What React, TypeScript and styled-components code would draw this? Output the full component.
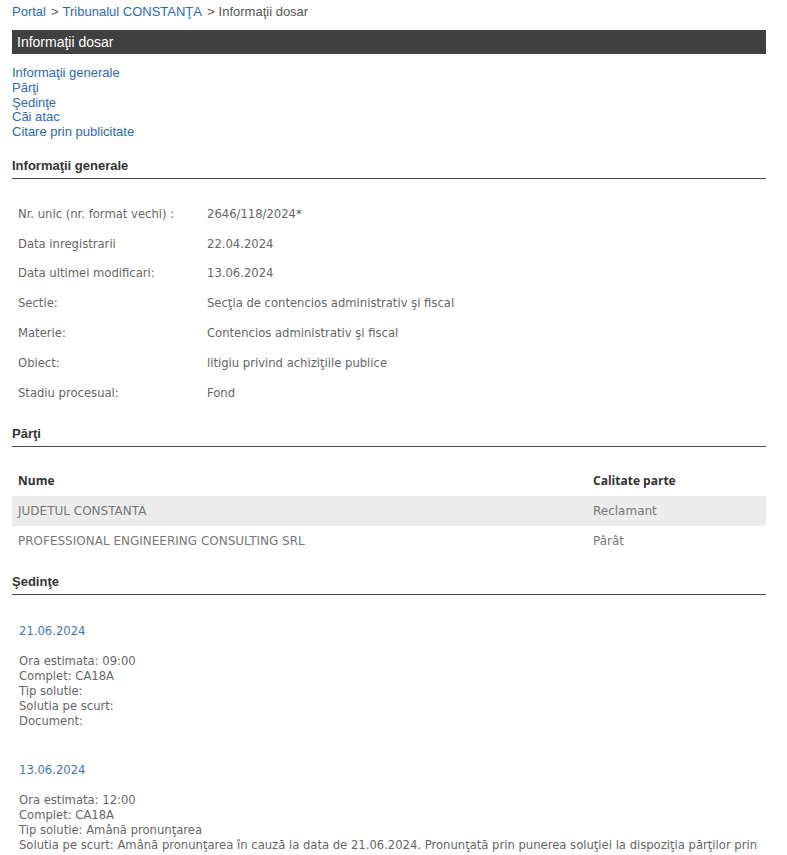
import React from 'react';
import styled, { createGlobalStyle } from 'styled-components';

const GlobalStyle = createGlobalStyle`
  body {
    margin: 0;
    background: #ffffff;
    font-family: 'Liberation Sans', Arial, sans-serif;
  }
`;

const info = [
  ['Nr. unic (nr. format vechi) :', '2646/118/2024*'],
  ['Data inregistrarii', '22.04.2024'],
  ['Data ultimei modificari:', '13.06.2024'],
  ['Sectie:', 'Secţia de contencios administrativ şi fiscal'],
  ['Materie:', 'Contencios administrativ şi fiscal'],
  ['Obiect:', 'litigiu privind achiziţiile publice'],
  ['Stadiu procesual:', 'Fond'],
];

const parti = [
  { nume: 'JUDETUL CONSTANTA', calitate: 'Reclamant' },
  { nume: 'PROFESSIONAL ENGINEERING CONSULTING SRL', calitate: 'Pârât' },
];

const sedinte = [
  {
    data: '21.06.2024',
    ora: '09:00',
    complet: 'CA18A',
    tip: '',
    solutie: '',
    document: '',
  },
  {
    data: '13.06.2024',
    ora: '12:00',
    complet: 'CA18A',
    tip: 'Amână pronunţarea',
    solutie:
      'Amână pronunţarea în cauză la data de 21.06.2024. Pronunţată prin punerea soluţiei la dispoziţia părţilor prin mijlocirea grefei instanţei.',
    document: 'Încheiere de amânare a pronunţării 13.06.2024',
  },
];

export default function App() {
  return (
    <>
      <GlobalStyle />
      <Page>
        <Breadcrumb>
          <Crumb href="#">Portal</Crumb>
          <Sep>&gt;</Sep>
          <Crumb href="#">Tribunalul CONSTANŢA</Crumb>
          <Sep>&gt;</Sep>
          <Current>Informaţii dosar</Current>
        </Breadcrumb>

        <TitleBar>Informaţii dosar</TitleBar>

        <Menu>
          <MenuLink href="#">Informaţii generale</MenuLink>
          <MenuLink href="#">Părţi</MenuLink>
          <MenuLink href="#">Şedinţe</MenuLink>
          <MenuLink href="#">Căi atac</MenuLink>
          <MenuLink href="#">Citare prin publicitate</MenuLink>
        </Menu>

        <SectionTitle>Informaţii generale</SectionTitle>
        <InfoTable>
          {info.map(([label, value]) => (
            <InfoRow key={label}>
              <span>{label}</span>
              <span>{value}</span>
            </InfoRow>
          ))}
        </InfoTable>

        <SectionTitle>Părţi</SectionTitle>
        <PartiTable>
          <PartiRow>
            <HeadCell>Nume</HeadCell>
            <HeadCell>Calitate parte</HeadCell>
          </PartiRow>
          {parti.map((p, i) => (
            <PartiRow key={p.nume} striped={i % 2 === 0}>
              <Cell>{p.nume}</Cell>
              <Cell>{p.calitate}</Cell>
            </PartiRow>
          ))}
        </PartiTable>

        <SectionTitle>Şedinţe</SectionTitle>
        <Sedinte>
          {sedinte.map((s) => (
            <Sedinta key={s.data}>
              <SedintaDate>{s.data}</SedintaDate>
              <SedintaLines>
                <div>Ora estimata: {s.ora}</div>
                <div>Complet: {s.complet}</div>
                <div>Tip solutie: {s.tip}</div>
                <div>Solutia pe scurt: {s.solutie}</div>
                <div>Document: {s.document}</div>
              </SedintaLines>
            </Sedinta>
          ))}
        </Sedinte>
      </Page>
    </>
  );
}

const Page = styled.div`
  width: 754px;
  margin-left: 12px;
  padding-top: 4px;
  padding-bottom: 40px;
`;

const Breadcrumb = styled.div`
  display: flex;
  align-items: baseline;
  font-size: 13px;
  line-height: 16px;
  color: #555555;
`;

const Crumb = styled.a`
  color: #2a6ab4;
  text-decoration: none;
`;

const Sep = styled.span`
  margin: 0 4px 0 5px;
  color: #555555;
`;

const Current = styled.span`
  color: #555555;
`;

const TitleBar = styled.div`
  margin-top: 10px;
  height: 24px;
  line-height: 24px;
  padding-left: 5px;
  background: #404040;
  color: #ffffff;
  font-size: 14px;
`;

const Menu = styled.div`
  display: flex;
  flex-direction: column;
  margin-top: 12px;
`;

const MenuLink = styled.a`
  font-size: 13px;
  line-height: 14.8px;
  color: #2a6ab4;
  text-decoration: none;
`;

const SectionTitle = styled.div`
  margin-top: 18px;
  padding-bottom: 4px;
  border-bottom: 1px solid #4a4a4a;
  font-size: 13px;
  font-weight: bold;
  line-height: 16px;
  color: #333333;
`;

const InfoTable = styled.div`
  display: flex;
  flex-direction: column;
  padding-top: 20px;
  padding-left: 6px;
`;

const InfoRow = styled.div`
  display: grid;
  grid-template-columns: 189px 1fr;
  height: 29.8px;
  align-items: center;
  font-family: 'DejaVu Sans', Verdana, sans-serif;
  font-size: 11.6px;
  color: #666666;
`;

const PartiTable = styled.div`
  display: flex;
  flex-direction: column;
  padding-top: 19px;
`;

const PartiRow = styled.div<{ striped?: boolean }>`
  display: grid;
  grid-template-columns: 575px 1fr;
  height: 30px;
  align-items: center;
  padding-left: 6px;
  background: ${(props) => (props.striped ? '#ececec' : 'transparent')};
`;

const HeadCell = styled.span`
  font-family: 'Open Sans', 'DejaVu Sans', sans-serif;
  font-size: 12px;
  font-weight: bold;
  color: #333333;
`;

const Cell = styled.span`
  font-family: 'DejaVu Sans', Verdana, sans-serif;
  font-size: 12px;
  color: #777777;
`;

const Sedinte = styled.div`
  display: flex;
  flex-direction: column;
  gap: 34px;
  padding-top: 29px;
  padding-left: 7px;
`;

const Sedinta = styled.div`
  display: flex;
  flex-direction: column;
`;

const SedintaDate = styled.div`
  font-family: 'DejaVu Sans', Verdana, sans-serif;
  font-size: 11.6px;
  line-height: 15px;
  color: #3f78b4;
  margin-bottom: 15px;
`;

const SedintaLines = styled.div`
  font-family: 'DejaVu Sans', Verdana, sans-serif;
  font-size: 11.6px;
  line-height: 15px;
  color: #666666;
`;
